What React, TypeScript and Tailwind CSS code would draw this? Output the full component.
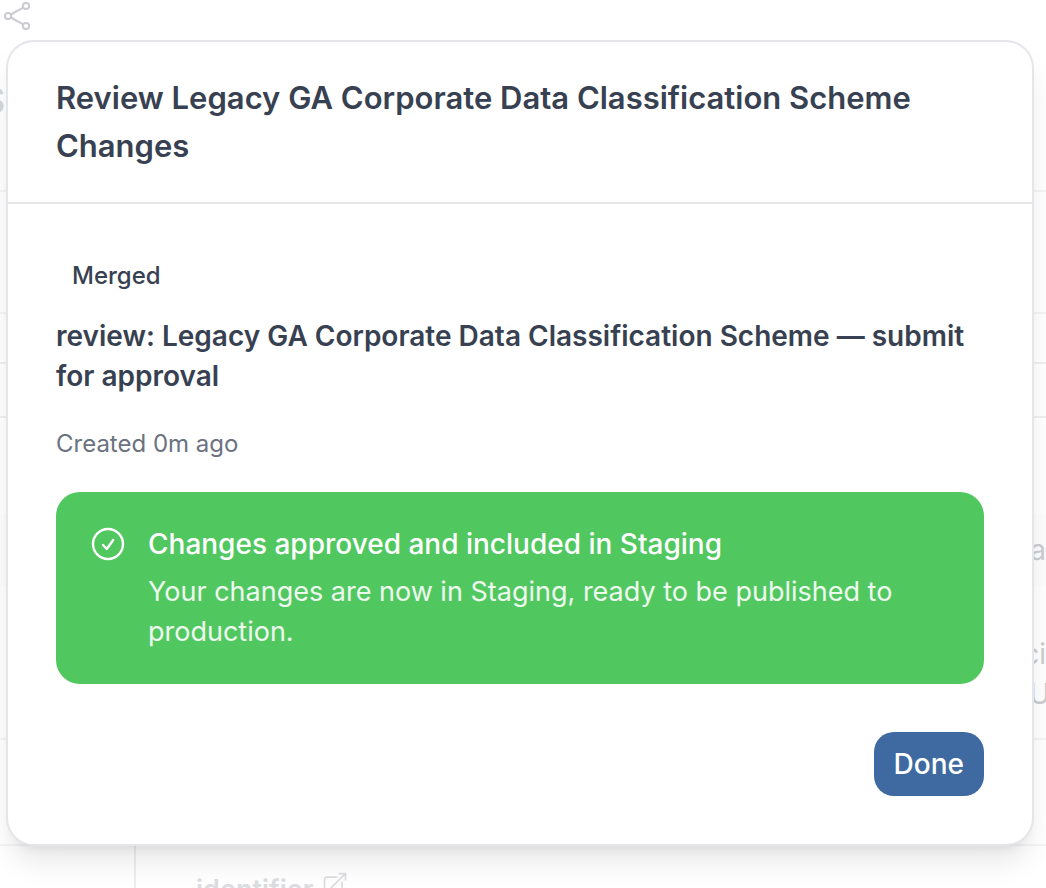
const changeRequest = {
  status: 'Merged',
  title: 'review: Legacy GA Corporate Data Classification Scheme — submit for approval',
  created: 'Created 0m ago',
}

function ShareIcon() {
  return (
    <svg className="w-7 h-7" viewBox="0 0 28 28" fill="none" stroke="currentColor" strokeWidth="2">
      <circle cx="4" cy="14" r="3.1" />
      <circle cx="22" cy="4" r="3.1" />
      <circle cx="22" cy="24" r="3.1" />
      <path d="M6.8 12.5 19.3 5.6M6.8 15.5l12.5 6.9" />
    </svg>
  )
}

function ExternalLinkIcon() {
  return (
    <svg className="w-7 h-7" viewBox="0 0 24 24" fill="none" stroke="currentColor" strokeWidth="1.5" strokeLinecap="round" strokeLinejoin="round">
      <path d="M13.5 6H5.25A2.25 2.25 0 0 0 3 8.25v10.5A2.25 2.25 0 0 0 5.25 21h10.5A2.25 2.25 0 0 0 18 18.75V10.5m-10.5 6L21 3m0 0h-5.25M21 3v5.25" />
    </svg>
  )
}

function CheckCircleIcon() {
  return (
    <svg className="w-9 h-9 shrink-0" viewBox="0 0 36 36" fill="none" stroke="currentColor" strokeWidth="2.4" strokeLinecap="round" strokeLinejoin="round">
      <circle cx="18" cy="18" r="15" />
      <path d="m13 19 3.8 4L23.2 14" />
    </svg>
  )
}

function Backdrop() {
  return (
    <div aria-hidden="true" className="h-screen overflow-hidden text-[#cbccd0]">
      <div className="h-20 px-1 py-0.5">
        <ShareIcon />
      </div>
      <div className="h-28 border-b-2 border-[#f4f4f5] text-4xl font-medium text-[#d6d7d9]">
        <span className="-ml-[18px]">S</span>
      </div>
      <div className="h-[122px] border-b-2 border-[#f4f4f5]" />
      <div className="h-[50px] border-b-2 border-[#eeeeef]" />
      <div className="h-[54px] border-b-2 border-[#eeeeef]" />
      <div className="h-24" />
      <div className="h-18 bg-[#fdfdfd] flex items-center justify-end text-[28px]">a</div>
      <div className="h-[154px] border-b-2 border-[#f4f4f5] pt-12 flex flex-col items-end text-[28px] leading-10">
        <span>ci</span>
        <span className="-mr-1">U</span>
      </div>
      <div className="h-[106px] border-b-2 border-[#f4f4f5]" />
      <div className="h-24 flex">
        <div className="w-34 border-r-2 border-[#eeeeef]" />
        <div className="pl-15 pt-6 flex gap-2 text-[27px] leading-10 font-semibold text-[#dcdde0]">
          <span>identifier</span>
          <ExternalLinkIcon />
        </div>
      </div>
    </div>
  )
}

export default function App() {
  return (
    <div className="relative min-h-screen bg-white font-['Inter',sans-serif]">
      <Backdrop />

      <div className="absolute inset-0 pt-10 pl-1.5 pr-3">
        <div
          role="dialog"
          aria-labelledby="review-title"
          className="bg-white border-2 border-[#e5e5ea] rounded-[28px] shadow-[0_20px_30px_-6px_rgba(0,0,0,0.1),0_8px_12px_-8px_rgba(0,0,0,0.1)]"
        >
          <div className="px-12 py-8 border-b-2 border-[#e5e5ea]">
            <h2 id="review-title" className="text-[31px] leading-12 font-semibold text-[#374151]">
              Review Legacy GA Corporate Data Classification Scheme Changes
            </h2>
          </div>

          <div className="p-12">
            <div className="flex">
              <span className="px-4 py-2 text-2xl leading-8 font-medium text-[#374151]">
                {changeRequest.status}
              </span>
            </div>

            <h3 className="mt-4 text-[28px] leading-10 font-semibold text-[#374151]">
              {changeRequest.title}
            </h3>
            <p className="mt-8 text-2xl leading-8 text-[#6b7280]">{changeRequest.created}</p>

            <div className="mt-8 px-[34px] py-8 flex gap-[22px] rounded-3xl bg-[#51c760] text-white">
              <div className="pt-0.5">
                <CheckCircleIcon />
              </div>
              <div>
                <p className="text-[28px] leading-10 font-medium">
                  Changes approved and included in Staging
                </p>
                <p className="mt-2 text-[27px] leading-10 text-white/90">
                  Your changes are now in Staging, ready to be published to production.
                </p>
              </div>
            </div>

            <div className="mt-12 flex justify-end">
              <button type="button" className="h-16 px-5 rounded-[20px] bg-[#3e6aa1] text-[28px] leading-10 font-medium text-white">
                Done
              </button>
            </div>
          </div>
        </div>
      </div>
    </div>
  )
}
